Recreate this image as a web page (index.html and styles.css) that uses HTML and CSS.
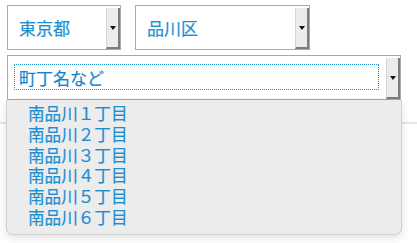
FILE: index.html
```html
<!DOCTYPE html>
<html lang="ja">
<head>
  <meta charset="UTF-8" />
  <title>住所選択</title>
  <link rel="stylesheet" href="styles.css">
</head>
<body>
  <div class="form">
    <div class="row">
      <div class="select pref">
        <span class="value">東京都</span>
        <span class="btn"><i class="arrow"></i></span>
      </div>
      <div class="select city">
        <span class="value">品川区</span>
        <span class="btn"><i class="arrow"></i></span>
      </div>
    </div>
    <div class="row">
      <div class="select town">
        <span class="value focus">町丁名など</span>
        <span class="btn"><i class="arrow"></i></span>
      </div>
    </div>
    <div class="rule"></div>

    <ul class="popup">
      <li>南品川１丁目</li>
      <li>南品川２丁目</li>
      <li>南品川３丁目</li>
      <li>南品川４丁目</li>
      <li>南品川５丁目</li>
      <li>南品川６丁目</li>
    </ul>
  </div>
</body>
</html>
```

FILE: styles.css
```css
html, body {
  min-height: 243px;
}

body {
  margin: 0;
  background: #fff;
  font-family: "Noto Sans CJK JP", "Noto Sans", sans-serif;
}

.form {
  position: relative;
  min-height: 243px;
  padding: 5px 0 0 7px;
  box-sizing: border-box;
}

.row {
  display: flex;
  gap: 14px;
  margin-bottom: 5px;
}

.select {
  box-sizing: border-box;
  display: flex;
  height: 45px;
  border: 1px solid #a8a8a8;
  background: #fff;
}

.pref { width: 114px; }
.city { width: 175px; }
.town { width: 394px; }

.value {
  flex: 1;
  display: flex;
  align-items: center;
  padding-left: 11px;
  font-size: 17px;
  color: #1b8fd2;
  -webkit-text-stroke: 0.2px #1b8fd2;
}

.value.focus {
  margin: 8px 7px 9px 6px;
  padding-left: 4px;
  border: 1px dotted #1b8fd2;
  color: #1585c8;
}

.btn {
  box-sizing: border-box;
  width: 14px;
  margin-top: 2px;
  display: flex;
  align-items: center;
  justify-content: center;
  background: #ececec;
  border-left: 1px solid #d6d6d6;
  border-right: 2px solid #7d7d7d;
  border-bottom: 2px solid #7d7d7d;
}

.arrow {
  width: 0;
  height: 0;
  border-left: 3px solid transparent;
  border-right: 3px solid transparent;
  border-top: 4px solid #111;
}

.rule {
  margin-top: 22px;
  margin-left: -7px;
  height: 2px;
  background: #e6e6e6;
}

.popup {
  position: absolute;
  top: 100px;
  left: 6px;
  box-sizing: border-box;
  width: 396px;
  height: 135px;
  margin: 0;
  padding: 3px 0 0 21px;
  list-style: none;
  background: #ececec;
  border: 1px solid #d0d0d0;
  border-top: none;
  border-radius: 0 0 7px 7px;
  box-shadow: 0 3px 8px rgba(0, 0, 0, 0.12);
}

.popup li {
  font-size: 16.6px;
  line-height: 20.8px;
  color: #1b8fd2;
  -webkit-text-stroke: 0.2px #1b8fd2;
}
```
